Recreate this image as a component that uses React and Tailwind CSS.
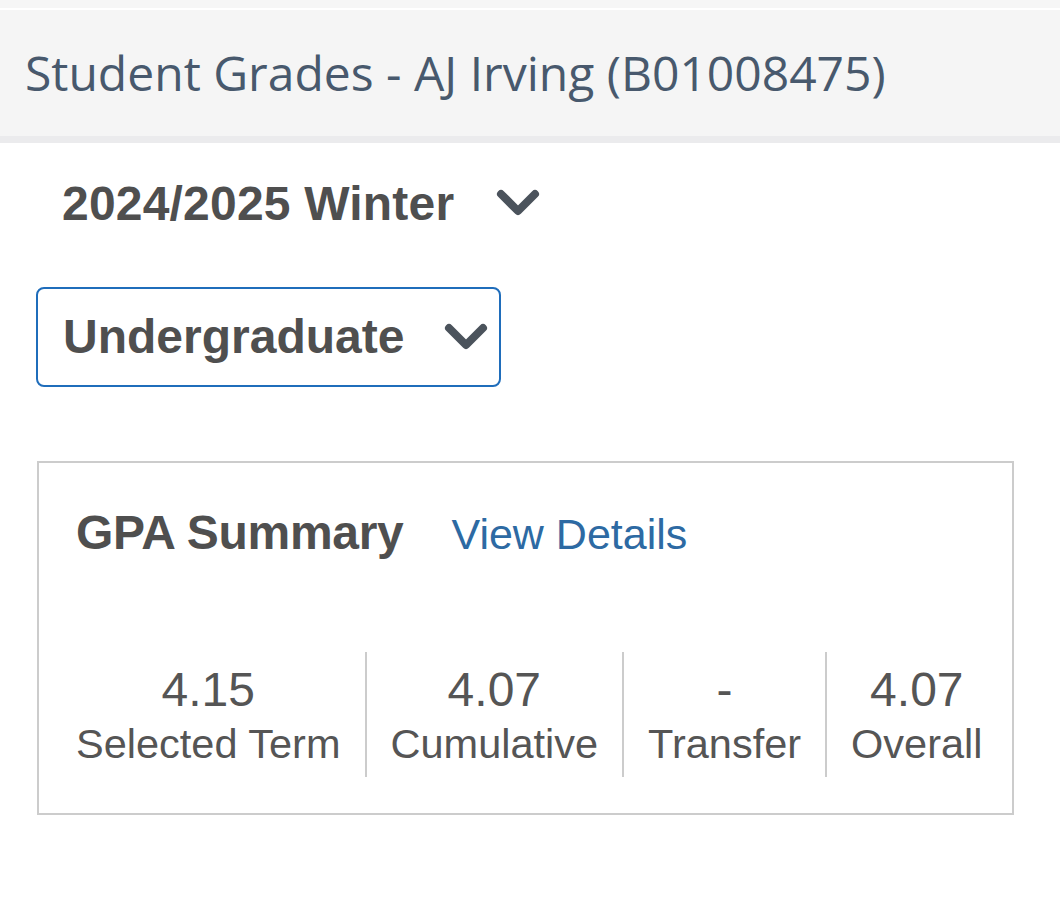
import React from "react";

function Chevron({ className }) {
  return (
    <svg viewBox="0 0 44 30" className={className} fill="none">
      <path
        d="M5 6 L22 23 L39 6"
        stroke="#4b535c"
        strokeWidth="8"
        strokeLinecap="round"
        strokeLinejoin="round"
      />
    </svg>
  );
}

const stats = [
  { value: "4.15", label: "Selected Term" },
  { value: "4.07", label: "Cumulative" },
  { value: "-", label: "Transfer" },
  { value: "4.07", label: "Overall" },
];

export default function App() {
  return (
    <div className="min-h-screen bg-white" style={{ fontFamily: '"Liberation Sans", Arial, sans-serif' }}>
      {/* top strip */}
      <div className="h-[8px] bg-[#f6f6f6]" />
      <div className="h-[2px] bg-white" />
      {/* page header */}
      <div className="h-[126px] bg-[#f5f5f5] flex items-center pl-[25px]">
        <h1
          className="text-[48px] text-[#48596d] leading-none"
          style={{ fontFamily: '"Open Sans", sans-serif' }}
        >
          Student Grades - AJ Irving (B01008475)
        </h1>
      </div>
      <div className="h-[7px] bg-[#ebebed]" />

      {/* term selector */}
      <div className="flex items-start pl-[62px] pt-[33px] h-[120px]">
        <span className="text-[48px] font-bold text-[#4f4f4f] leading-[56px] tracking-[0.2px]">
          2024/2025 Winter
        </span>
        <Chevron className="w-[44px] h-[30px] ml-[42px] mt-[12px]" />
      </div>

      {/* career select */}
      <div className="pl-[36px] mt-[24px]">
        <div className="w-[465px] h-[100px] border-2 border-[#1f6dbb] rounded-[8px] flex items-center justify-between pl-[25px] pr-[11px]">
          <span className="text-[48px] font-bold text-[#4f4f4f] leading-none">
            Undergraduate
          </span>
          <Chevron className="w-[44px] h-[30px]" />
        </div>
      </div>

      {/* GPA summary */}
      <div className="pl-[37px] mt-[74px]">
        <div className="w-[977px] h-[354px] border-2 border-[#cccccc] pl-[37px] pt-[40px]">
          <div className="flex items-baseline">
            <h2 className="text-[48px] font-bold text-[#4f4f4f] leading-[60px] tracking-[-0.3px]">
              GPA Summary
            </h2>
            <a className="ml-[48px] text-[43px] text-[#2d6aa3] leading-[60px]">
              View Details
            </a>
          </div>
          <div className="flex mt-[88px] h-[125px]">
            {stats.map((s, i) => (
              <div
                key={s.label}
                className={`shrink-0 whitespace-nowrap flex flex-col items-center justify-center text-[#555555] ${
                  i === 0 ? "pr-[24px]" : "px-[24px] border-l-2 border-[#cccccc]"
                }`}
              >
                <span className="text-[48px] leading-[58px]">{s.value}</span>
                <span className="text-[41.5px] leading-[50px]">{s.label}</span>
              </div>
            ))}
          </div>
        </div>
      </div>
    </div>
  );
}
